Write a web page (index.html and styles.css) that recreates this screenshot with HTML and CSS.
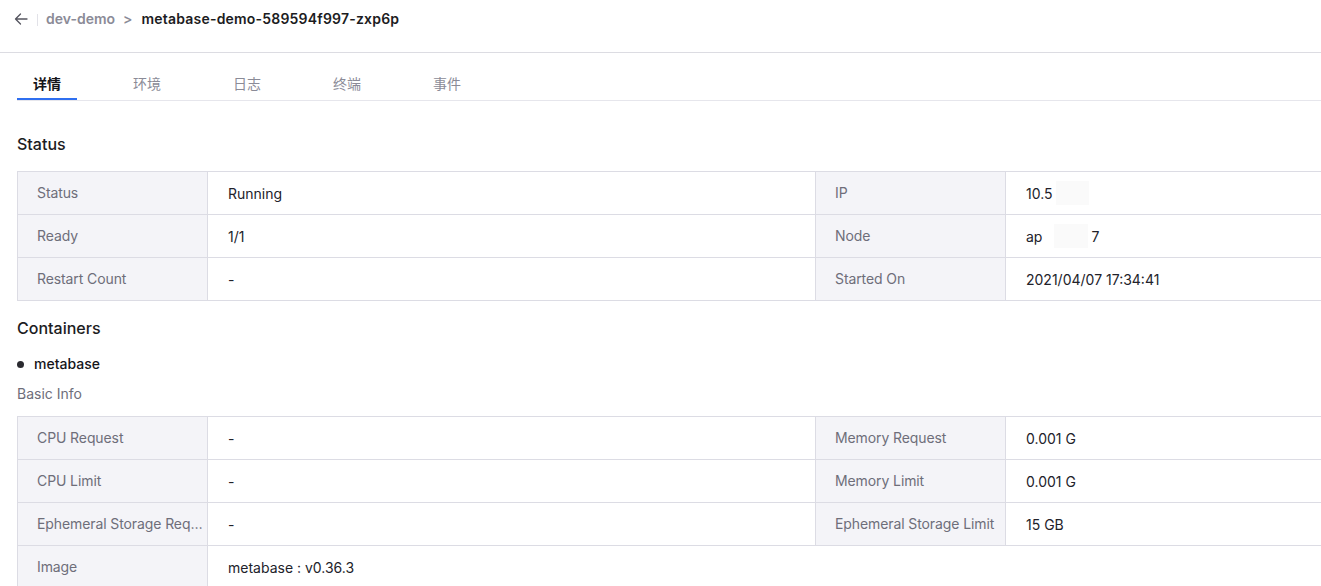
FILE: index.html
```html
<!DOCTYPE html>
<html lang="en">
<head>
  <meta charset="UTF-8" />
  <title>metabase-demo-589594f997-zxp6p</title>
  <link rel="stylesheet" href="styles.css">
</head>
<body>
  <div class="header">
    <span class="back">
      <svg width="14" height="14" viewBox="0 0 14 14" fill="none" stroke="#55555f" stroke-width="1.3" stroke-linecap="round" stroke-linejoin="round">
        <path d="M13 7H1.5M6.5 2L1.5 7l5 5"/>
      </svg>
    </span>
    <span class="sep"></span>
    <span class="crumb">dev-demo</span>
    <span class="crumb-arrow">&gt;</span>
    <span class="title">metabase-demo-589594f997-zxp6p</span>
  </div>

  <div class="tabs">
    <div class="tab active">详情</div>
    <div class="tab">环境</div>
    <div class="tab">日志</div>
    <div class="tab">终端</div>
    <div class="tab">事件</div>
  </div>

  <div class="content">
    <div class="section-title">Status</div>
    <div class="info-table">
      <div class="cell label">Status</div>
      <div class="cell">Running</div>
      <div class="cell label">IP</div>
      <div class="cell">10.5<span class="redact ip"></span></div>

      <div class="cell label">Ready</div>
      <div class="cell">1/1</div>
      <div class="cell label">Node</div>
      <div class="cell">ap<span class="redact node"></span>7</div>

      <div class="cell label">Restart Count</div>
      <div class="cell">-</div>
      <div class="cell label">Started On</div>
      <div class="cell">2021/04/07 17:34:41</div>
    </div>

    <div class="section-title containers">Containers</div>
    <div class="container-name"><span class="dot"></span>metabase</div>
    <div class="sub-title">Basic Info</div>
    <div class="info-table">
      <div class="cell label">CPU Request</div>
      <div class="cell">-</div>
      <div class="cell label">Memory Request</div>
      <div class="cell">0.001 G</div>

      <div class="cell label">CPU Limit</div>
      <div class="cell">-</div>
      <div class="cell label">Memory Limit</div>
      <div class="cell">0.001 G</div>

      <div class="cell label">Ephemeral Storage Request</div>
      <div class="cell">-</div>
      <div class="cell label">Ephemeral Storage Limit</div>
      <div class="cell">15 GB</div>

      <div class="cell label">Image</div>
      <div class="cell wide">metabase : v0.36.3</div>
    </div>
  </div>
</body>
</html>
```

FILE: styles.css
```css
* { box-sizing: border-box; }

body {
  margin: 0;
  font-family: Inter, "Noto Sans CJK SC", sans-serif;
  font-size: 14px;
  color: #262630;
  background: #fff;
  overflow: hidden;
}

.header {
  height: 53px;
  border-bottom: 1px solid #dcdce2;
  display: flex;
  align-items: flex-start;
  padding: 11px 0 0 14px;
  line-height: 16px;
}

.back {
  display: flex;
  width: 14px;
  height: 16px;
  align-items: center;
}

.sep {
  width: 1px;
  height: 12px;
  background: #e2e2e8;
  margin: 3px 8px 0 9px;
}

.crumb {
  font-weight: 600;
  color: #8b8b97;
}

.crumb-arrow {
  font-weight: 600;
  color: #8b8b97;
  margin: 0 9px 0 8px;
}

.title {
  font-weight: 600;
  color: #1c1c22;
  letter-spacing: 0.2px;
}

.tabs {
  display: flex;
  gap: 40px;
  margin: 20px 0 0 17px;
  border-bottom: 1px solid #e6e6ec;
}

.tab {
  width: 60px;
  text-align: center;
  line-height: 22px;
  padding-bottom: 3px;
  border-bottom: 2px solid transparent;
  color: #8b8b97;
}

.tab.active {
  color: #15151a;
  font-weight: 600;
  border-bottom-color: #2f6ff0;
}

.content {
  padding: 0 0 0 17px;
  overflow: hidden;
}

.section-title {
  font-size: 16px;
  line-height: 24px;
  font-weight: 500;
  color: #1c1c22;
  margin: 31px 0 15px;
}

.section-title.containers {
  margin: 15px 0 0;
}

.container-name {
  display: flex;
  align-items: center;
  line-height: 22px;
  margin-top: 13px;
  font-weight: 500;
  color: #15151a;
}

.dot {
  width: 7px;
  height: 7px;
  border-radius: 50%;
  background: #2a2a30;
  margin-right: 10px;
}

.sub-title {
  line-height: 22px;
  margin: 8px 0 11px;
  color: #6e6e7a;
}

.info-table {
  display: grid;
  grid-template-columns: 190px 608px 190px 608px;
  width: 1596px;
  border-top: 1px solid #dcdce4;
  border-left: 1px solid #dcdce4;
}

.cell {
  height: 43px;
  display: flex;
  align-items: center;
  padding: 0 20px;
  border-right: 1px solid #dcdce4;
  border-bottom: 1px solid #dcdce4;
  white-space: nowrap;
  color: #22222a;
}

.cell.wide {
  grid-column: span 3;
}

.cell.label {
  display: block;
  line-height: 42px;
  padding: 0 3px 0 19px;
  background: #f4f4f8;
  color: #6e6e7a;
  letter-spacing: -0.1px;
  overflow: hidden;
  text-overflow: ellipsis;
}

.redact {
  display: inline-block;
  height: 24px;
  background: #fafafa;
}

.redact.ip {
  width: 33px;
  margin-left: 3px;
}

.redact.node {
  width: 34px;
  margin: 0 3px 0 12px;
}
```
